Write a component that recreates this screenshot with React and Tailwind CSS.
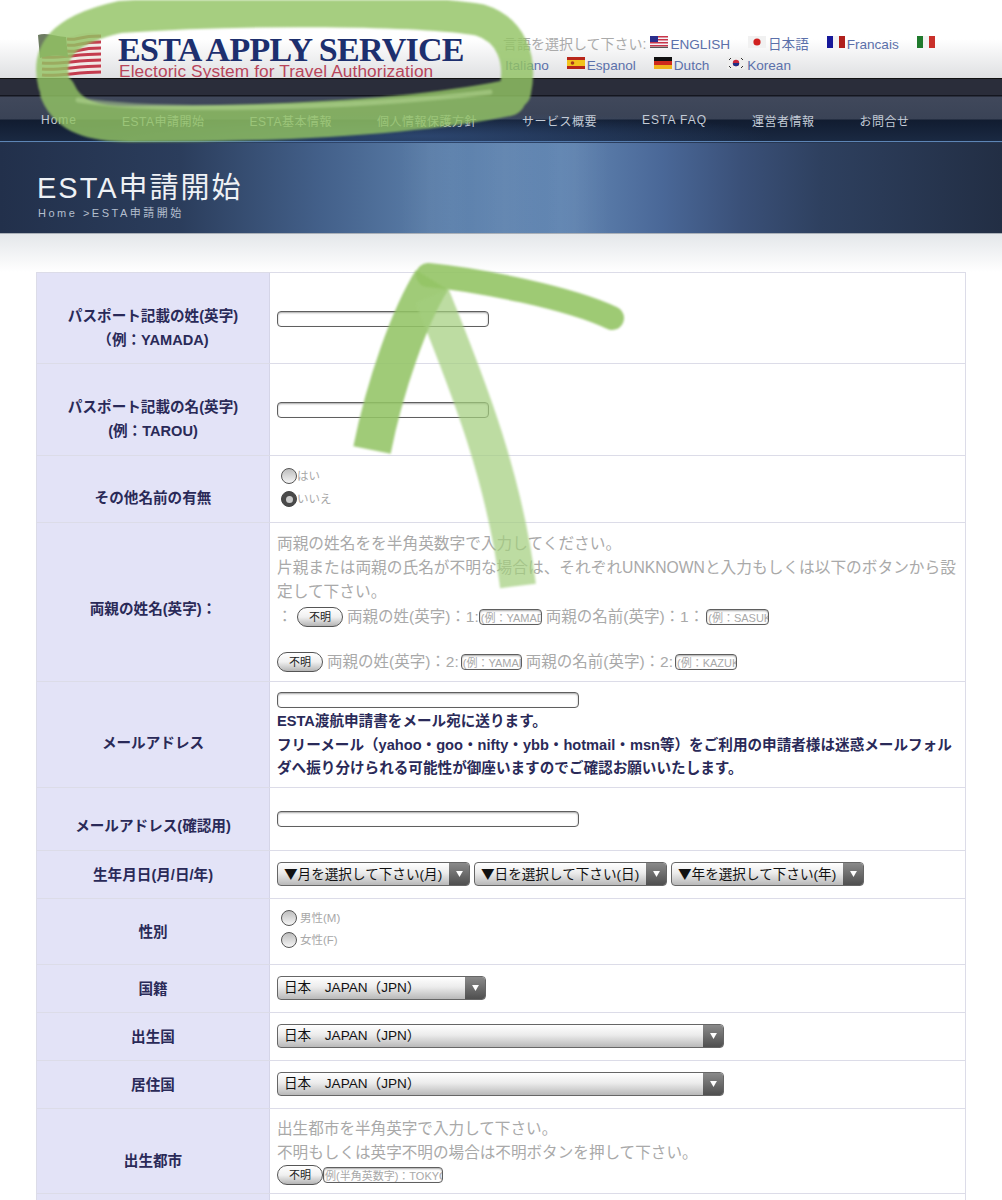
const FONT = { fontFamily: '"Liberation Sans","Noto Sans CJK JP",sans-serif' };

const Flag = ({ children }) => (
  <svg viewBox="0 0 18 12" className="inline-block h-[12px] w-[18px] align-[1px]">{children}</svg>
);
const flags = {
  us: (
    <>
      <rect width="18" height="12" fill="#f4f4f8" />
      <rect y="0" width="18" height="1.5" fill="#c8364a" /><rect y="3" width="18" height="1.5" fill="#c8364a" />
      <rect y="6" width="18" height="1.5" fill="#c8364a" /><rect y="9" width="18" height="1.5" fill="#c8364a" />
      <rect y="10.8" width="18" height="1.2" fill="#555" />
      <rect width="8" height="6" fill="#2b2e8c" />
    </>
  ),
  jp: (<><rect width="18" height="12" fill="#f1f1f1" /><circle cx="9" cy="6" r="3.6" fill="#d0201f" /></>),
  fr: (<><rect width="18" height="12" fill="#f2f2f2" /><rect width="6" height="12" fill="#16189a" /><rect x="12" width="6" height="12" fill="#b0201c" /></>),
  it: (<><rect width="18" height="12" fill="#f2f2f2" /><rect width="6" height="12" fill="#1f7a2c" /><rect x="12" width="6" height="12" fill="#c9302a" /></>),
  es: (<><rect width="18" height="12" fill="#b8261a" /><rect y="3" width="18" height="6" fill="#f2c31c" /><circle cx="5.5" cy="6" r="1.8" fill="#a83a1c" /></>),
  de: (<><rect width="18" height="4" fill="#111" /><rect y="4" width="18" height="4" fill="#cf2a1c" /><rect y="8" width="18" height="4" fill="#f0b41c" /></>),
  kr: (
    <>
      <rect width="18" height="12" fill="#eee" />
      <circle cx="9" cy="6" r="3.2" fill="#c8263a" />
      <path d="M5.8 6a3.2 3.2 0 0 0 6.4 0z" fill="#1d2f86" />
      <path d="M2 3l2-2M2 9l2 2M16 3l-2-2M16 9l-2 2" stroke="#333" strokeWidth="1" />
    </>
  ),
};

const Lang = ({ f, t, last }) => (
  <>
    <Flag>{flags[f]}</Flag>
    <wbr />
    <span className={`ml-[2px] text-[13.6px] text-[#5b70aa] ${last ? "" : "mr-[14px]"}`}>{t}</span>{" "}
  </>
);

const Input = ({ w, ph }) => (
  <div className={`${w} h-[16px] shrink-0 overflow-hidden whitespace-nowrap rounded-[4px] border border-[#5f5f5f] bg-white pl-[1px] text-[11px] leading-[17px] text-[#a8a8a8] shadow-[inset_0_1px_2px_rgba(0,0,0,0.35)]`}>
    {ph}
  </div>
);

const Unknown = () => (
  <span className="flex h-[20px] w-[46px] shrink-0 items-center justify-center rounded-full border border-[#555] bg-[linear-gradient(to_bottom,#ffffff,#f0f0f0_50%,#b5b5b5)] text-[11px] text-[#222]">
    不明
  </span>
);

const Radio = ({ on, label, cls }) => (
  <div className={`flex items-center ${cls}`}>
    {on ? (
      <span className="flex h-[16px] w-[16px] items-center justify-center rounded-full border border-[#444] bg-[#4a4a4a]">
        <span className="h-[7px] w-[7px] rounded-full bg-[#ccc]" />
      </span>
    ) : (
      <span className="h-[16px] w-[16px] rounded-full border border-[#555] bg-[linear-gradient(to_bottom,#bdbdbd,#f5f5f5)]" />
    )}
    <span className="text-[11.5px] text-[#a8a8a8]">{label}</span>
  </div>
);

const Select = ({ w, mark, children }) => (
  <div className={`${w} flex h-[24px] items-center justify-between overflow-hidden whitespace-nowrap rounded-[4px] border border-[#666] bg-[linear-gradient(to_bottom,#ffffff,#ececec_45%,#b9b9b9)] text-[13.6px] text-[#111]`}>
    <span className="pl-[6px]">
      {mark && <span className="font-['Noto_Sans_CJK_JP']">▼</span>}
      {children}
    </span>
    <span className="flex h-full w-[20px] items-center justify-center bg-[linear-gradient(to_bottom,#8a8a8a,#4f4f4f)]">
      <svg viewBox="0 0 8 7" className="h-[6px] w-[7px]"><path d="M0 0h8L4 7z" fill="#fff" /></svg>
    </span>
  </div>
);

const Row = ({ h, label, labelPt = "", cellCls = "", children }) => (
  <div className={`flex ${h} border-b border-[#dcdce8]`}>
    <div className={`flex w-[233px] shrink-0 flex-col items-center justify-center border-r border-[#d5d5e8] bg-[#e3e3f7] text-center text-[14.6px] font-bold leading-[24px] text-[#2a2a58] ${labelPt}`}>
      {label}
    </div>
    <div className={`min-w-0 flex-1 pl-[7px] ${cellCls}`}>{children}</div>
  </div>
);

const NAV = [
  ["Home", "-mt-[2px] tracking-[1px]"],
  ["ESTA申請開始", ""],
  ["ESTA基本情報", ""],
  ["個人情報保護方針", ""],
  ["サービス概要", ""],
  ["ESTA FAQ", "-mt-[2px] tracking-[1px]"],
  ["運営者情報", ""],
  ["お問合せ", ""],
];

export default function App() {
  return (
    <div style={FONT} className="relative h-[1200px] overflow-hidden bg-white">
      {/* header */}
      <header className="flex h-[78px] overflow-hidden bg-[linear-gradient(to_bottom,#ffffff,#ffffff_50%,#dfe0e2)] pl-[37px]">
        <svg viewBox="0 0 66 46" className="mt-[32px] h-[46px] w-[66px] shrink-0">
          <path d="M1 3C14 -1 24 8 36 4S56 1 62 2L65 40C52 36 44 46 28 42S10 40 5 42z" fill="#f1e9e6" />
          {[6, 12, 18, 24, 30, 36, 42].map((y) => (
            <path key={y} d={`M${y < 24 ? 30 : 5} ${y + 1}C${y < 24 ? 40 : 20} ${y + 3} 40 ${y - 2} 64 ${y - 2}`} stroke="#c43c4e" strokeWidth="3" fill="none" />
          ))}
          <path d="M1 3C10 0 20 5 29 5L31 25C20 22 10 24 3 26z" fill="#6d7c62" />
        </svg>
        <div className="ml-[15px] w-[385px] shrink-0">
          <div style={{ fontFamily: '"Liberation Serif",serif' }} className="mt-[36px] h-[27px] whitespace-nowrap text-[34px] font-bold leading-[27px] tracking-[-0.7px] text-[#1d2f6e]">
            ESTA APPLY SERVICE
          </div>
          <div className="ml-[1px] whitespace-nowrap text-[17.3px] leading-[16px] tracking-[0.1px] text-[#b8455a]">
            Electoric System for Travel Authorization
          </div>
        </div>
        <div className="w-[450px] shrink-0 pt-[34px] text-[14px] leading-[21px] text-[#aaa]">
          <span>言語を選択して下さい:</span>{" "}
          <Lang f="us" t="ENGLISH" />
          <Lang f="jp" t="日本語" />
          <Lang f="fr" t="Francais" />
          <Lang f="it" t="Italiano" />
          <Lang f="es" t="Espanol" />
          <Lang f="de" t="Dutch" />
          <Lang f="kr" t="Korean" last />
        </div>
      </header>

      {/* nav */}
      <nav className="flex h-[65px] items-start gap-[45px] bg-[radial-gradient(ellipse_350px_24px_at_420px_58px,rgba(60,95,150,0.55),rgba(60,95,150,0)),linear-gradient(to_bottom,#111_0,#111_1px,#2a2d3a_1px,#2a2d3a_17px,#14161f_17px,#14161f_18px,#40485b_19px,#3a4356_41px,#111c30_42px,#1a2942_63px,#5d85b5_63px,#5d85b5_64px,#26354f_64px)] pl-[41px] pt-[36px] text-[12px] tracking-[0.5px] text-[#c3cbd6]">
        {NAV.map(([t, c]) => (
          <a key={t} className={`whitespace-nowrap leading-[16px] ${c}`}>{t}</a>
        ))}
      </nav>

      {/* hero */}
      <section className="h-[90px] bg-[linear-gradient(to_right,rgba(255,255,255,0)_400px,rgba(255,255,255,0.03)_430px,rgba(255,255,255,0)_470px,rgba(255,255,255,0.03)_505px,rgba(255,255,255,0)_545px,rgba(255,255,255,0.03)_575px,rgba(255,255,255,0)_610px),linear-gradient(to_right,#22304b,#2b3d5c_18%,#43608a_32%,#5e82ad_45%,#6286b2_56%,#4a6898_66%,#3a5078_74%,#2e405f_82%,#222e44)] pl-[37px] pt-[27px]">
        <h1 className="text-[29px] font-normal leading-[36px] tracking-[2px] text-[#eef1f5]">ESTA申請開始</h1>
        <div className="ml-[1px] text-[11px] leading-[14px] tracking-[2.5px] text-[#b4bfce]">Home &gt;ESTA申請開始</div>
      </section>

      {/* fade */}
      <div className="h-[39px] border-t border-[#aab0b8] bg-[linear-gradient(to_bottom,#e4e7ea,#ffffff)]" />

      {/* table */}
      <main className="mx-[36px] border-x border-t border-[#dcdce8] text-[15.6px] leading-[24px] text-[#a9a9a9]">
        <Row h="h-[91px]" labelPt="pt-5" label={<><span>パスポート記載の姓(英字)</span><span>（例：YAMADA)</span></>} cellCls="pt-[38px]">
          <Input w="w-[212px]" />
        </Row>
        <Row h="h-[92px]" labelPt="pt-[19px]" label={<><span>パスポート記載の名(英字)</span><span>(例：TAROU)</span></>} cellCls="pt-[38px]">
          <Input w="w-[212px]" />
        </Row>
        <Row h="h-[67px]" labelPt="pt-[18px]" label="その他名前の有無" cellCls="pt-[12px] pl-[11px]">
          <Radio label="はい" cls="h-[16px]" />
          <Radio on label="いいえ" cls="mt-[7px] h-[16px]" />
        </Row>
        <Row h="h-[159px]" labelPt="pt-[14px]" label="両親の姓名(英字)：" cellCls="pt-[9px] pr-[8px]">
          <p className="text-[15.7px]">両親の姓名をを半角英数字で入力してください。</p>
          <p className="text-[15.7px]">片親または両親の氏名が不明な場合は、それぞれUNKNOWNと入力もしくは以下のボタンから設定して下さい。</p>
          <div className="mt-[1px] flex h-[24px] items-center whitespace-nowrap text-[15.5px]">
            <span className="w-[20px]">：</span>
            <Unknown />
            <span className="ml-[4px]">両親の姓(英字)：1:</span>
            <Input w="w-[63px]" ph="(例：YAMADA" />
            <span className="ml-[4px] mr-[2px]">両親の名前(英字)：1：</span>
            <Input w="w-[63px]" ph="(例：SASUKE" />
          </div>
          <div className="mt-[21px] flex h-[24px] items-center whitespace-nowrap text-[15.5px]">
            <Unknown />
            <span className="ml-[4px] mr-[2px]">両親の姓(英字)：2:</span>
            <Input w="w-[61px]" ph="(例：YAMADA" />
            <span className="ml-[4px] mr-[2px]">両親の名前(英字)：2:</span>
            <Input w="w-[62px]" ph="(例：KAZUKI" />
          </div>
        </Row>
        <Row h="h-[106px]" labelPt="pt-4" label="メールアドレス" cellCls="pt-[10px] pr-[8px]">
          <Input w="w-[302px]" />
          <div className="mt-[2px] text-[14.6px] font-bold leading-[23.7px] text-[#2a2a58]">
            <p>ESTA渡航申請書をメール宛に送ります。</p>
            <p>フリーメール（yahoo・goo・nifty・ybb・hotmail・msn等）をご利用の申請者様は迷惑メールフォルダへ振り分けられる可能性が御座いますのでご確認お願いいたします。</p>
          </div>
        </Row>
        <Row h="h-[63px]" labelPt="pt-[14px]" label="メールアドレス(確認用)" cellCls="pt-[23px]">
          <Input w="w-[302px]" />
        </Row>
        <Row h="h-[48px]" label="生年月日(月/日/年)" cellCls="flex gap-[4px] pt-[11px]">
          <Select mark w="w-[193px]">月を選択して下さい(月)</Select>
          <Select mark w="w-[193px]">日を選択して下さい(日)</Select>
          <Select mark w="w-[193px]">年を選択して下さい(年)</Select>
        </Row>
        <Row h="h-[66px]" label="性別" cellCls="pt-[11px] pl-[11px]">
          <Radio label="男性(M)" cls="h-[16px] gap-[3px]" />
          <Radio label="女性(F)" cls="mt-[6px] h-[16px] gap-[3px]" />
        </Row>
        <Row h="h-[48px]" label="国籍" cellCls="pt-[11px]">
          <Select w="w-[209px]">日本　JAPAN（JPN）</Select>
        </Row>
        <Row h="h-[48px]" label="出生国" cellCls="pt-[11px]">
          <Select w="w-[447px]">日本　JAPAN（JPN）</Select>
        </Row>
        <Row h="h-[48px]" label="居住国" cellCls="pt-[11px]">
          <Select w="w-[447px]">日本　JAPAN（JPN）</Select>
        </Row>
        <Row h="h-[85px]" labelPt="pt-5" label="出生都市" cellCls="pt-[8px]">
          <p>出生都市を半角英字で入力して下さい。</p>
          <p>不明もしくは英字不明の場合は不明ボタンを押して下さい。</p>
          <div className="flex h-[20px] items-center whitespace-nowrap">
            <Unknown />
            <Input w="w-[120px]" ph="例(半角英数字)：TOKYO" />
          </div>
        </Row>
        <Row h="h-[60px]" label="" />
      </main>

      {/* green marker annotation */}
      <svg viewBox="0 0 1002 1200" className="pointer-events-none absolute left-0 top-0 h-[1200px] w-[1002px] blur-[1px]" fill="none" strokeLinejoin="round">
        <g stroke="#93c465" opacity="0.82" strokeLinecap="round">
          <path d="M54 84C46 52 62 30 120 17C250 8 420 10 480 20C512 30 522 60 515 92" strokeWidth="32" />
          <path d="M58 92C68 116 92 124 130 124C250 124 400 120 508 98" strokeWidth="36" />
        </g>
        <path d="M78 100C150 112 340 110 490 92" stroke="#b9db98" strokeWidth="5" opacity="0.5" strokeLinecap="round" />
        <path d="M372 450C385 385 410 315 432 280" stroke="#93c465" strokeWidth="38" opacity="0.88" />
        <path d="M428 275C480 280 570 298 612 318" stroke="#93c465" strokeWidth="24" opacity="0.9" strokeLinecap="round" />
        <path d="M432 296C470 390 505 480 518 586" stroke="#a4cf7e" strokeWidth="36" opacity="0.72" />
      </svg>
    </div>
  );
}
